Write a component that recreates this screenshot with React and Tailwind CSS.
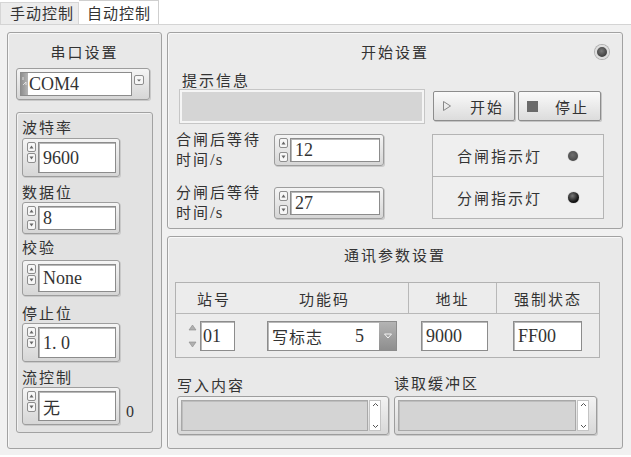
import React from 'react';

const SERIF = "font-['Liberation_Serif','Noto_Sans_CJK_SC',serif]";
const LABEL = 'text-[15px] leading-[20px] tracking-[2px]';

const Arrow = ({ up }) => (
  <svg width="9" height="10" viewBox="0 0 9 10" className="block">
    <rect x="0.5" y="0.5" width="8" height="9" rx="1.5" fill="#f6f6f6" stroke="#8e8e8e" />
    <path d={up ? 'M2.5 6.5L4.5 3.5L6.5 6.5Z' : 'M2.5 3.5L4.5 6.5L6.5 3.5Z'} fill="#666" />
  </svg>
);

const Field = ({ cls = '', children, font = SERIF }) => (
  <div className={`flex items-center border border-[#8c8c8c] bg-white pl-[4px] text-[18px] leading-none shadow-[inset_1px_1px_0_#b8b8b8] ${font} ${cls}`}>
    {children}
  </div>
);

const Spin = ({ cls, value, spread }) => (
  <div className={`flex flex-none rounded-[3px] border border-[#9d9d9d] bg-linear-to-b from-[#f5f5f5] to-[#d6d6d6] py-[3px] pr-[3px] pl-[4px] shadow-[1px_1px_0_#c9c9c9] ${cls}`}>
    <div className={`flex w-[9px] flex-col ${spread ? 'justify-between' : 'gap-[1px]'}`}>
      <Arrow up />
      <Arrow />
    </div>
    <Field cls="ml-[2px] flex-1">{value}</Field>
  </div>
);

const Led = ({ cls }) => <div className={`rounded-full ${cls}`} />;

const TextBox = ({ cls }) => (
  <div className={`flex h-[39px] rounded-[3px] border border-[#9d9d9d] bg-linear-to-b from-[#f3f3f3] to-[#d8d8d8] p-[3px] shadow-[1px_1px_0_#c9c9c9] ${cls}`}>
    <div className="flex-1 border border-[#a8a8a8] bg-[#d4d4d4] shadow-[inset_1px_1px_0_#bdbdbd]" />
    <div className="ml-[1px] flex w-[12px] flex-col items-center justify-between border border-[#c4c4c4] bg-white py-[1px]">
      <svg width="7" height="5" viewBox="0 0 7 5"><path d="M1 4L3.5 1.5L6 4" fill="none" stroke="#555" strokeWidth="1" /></svg>
      <svg width="7" height="5" viewBox="0 0 7 5"><path d="M1 1L3.5 3.5L6 1" fill="none" stroke="#555" strokeWidth="1" /></svg>
    </div>
    <div className="w-[4px]" />
  </div>
);

const WaitLabel = ({ first }) => (
  <div className="w-[98px] flex-none text-[15px] leading-[20px] tracking-[2px]">
    <div>{first}</div>
    <div>
      时间<span className={`${SERIF} text-[17px] tracking-[1px]`}>/s</span>
    </div>
  </div>
);

export default function App() {
  return (
    <div className="h-[457px] w-[631px] overflow-hidden bg-white font-['Noto_Sans_CJK_SC',sans-serif] text-[#333]">
      {/* tabs */}
      <div className="flex h-[24px] items-end">
        <div className="h-[22px] w-[79px] border border-b-0 border-[#d6d6d6] bg-[#ececec] pl-[9px] text-[15px] leading-[20px] tracking-[1px]">
          手动控制
        </div>
        <div className="h-[24px] w-[80px] border border-b-0 border-l-0 border-[#cfcfcf] bg-white pl-[8px] text-[15px] leading-[24px] tracking-[1px]">
          自动控制
        </div>
      </div>

      <div className="flex h-[431px] border-t border-[#d4d4d4] bg-[#f1f1f1] pt-[7px]">
        {/* 串口设置 */}
        <div className="ml-[7px] flex h-[417px] w-[155px] flex-col rounded-[3px] border border-[#a2a2a2] bg-[#e8e8e8] shadow-[inset_1px_1px_0_#f8f8f8]">
          <div className={`mt-[9px] text-center ${LABEL}`}>串口设置</div>

          <div className="mt-[6px] ml-[8px] flex h-[32px] w-[134px] rounded-[3px] border border-[#9d9d9d] bg-linear-to-b from-[#f5f5f5] to-[#d6d6d6] p-[3px] shadow-[1px_1px_0_#c9c9c9]">
            <div className="flex w-[112px] border border-[#8c8c8c] bg-white">
              <div className="flex w-[7px] items-start justify-center bg-linear-to-r from-[#8f8f8f] to-[#b5b5b5] pt-[3px]">
                <svg width="5" height="10" viewBox="0 0 5 10"><path d="M1 1V4M4 6L1 9M4 6V9" stroke="#eee" strokeWidth="0.8" fill="none" /></svg>
              </div>
              <div className={`flex items-center pl-[1px] text-[18px] leading-none ${SERIF}`}>COM4</div>
            </div>
            <div className="flex flex-1 justify-center pt-[3px]">
              <svg width="10" height="10" viewBox="0 0 10 10">
                <rect x="0.5" y="0.5" width="9" height="9" rx="1.5" fill="#f6f6f6" stroke="#8e8e8e" />
                <path d="M3 4.5L5 6.5L7 4.5Z" fill="#666" />
              </svg>
            </div>
          </div>

          <div className="mt-[12px] ml-[8px] flex h-[321px] w-[137px] flex-col rounded-[3px] border border-[#a2a2a2] bg-[#e2e2e2] pl-[5px] shadow-[inset_1px_1px_0_#f3f3f3]">
            <div className={`mt-[4px] ${LABEL}`}>波特率</div>
            <Spin cls="mt-[1px] h-[39px] w-[98px]" value="9600" />
            <div className={`mt-[5px] ${LABEL}`}>数据位</div>
            <Spin cls="h-[32px] w-[98px]" value="8" spread />
            <div className={`mt-[3px] ${LABEL}`}>校验</div>
            <Spin cls="mt-[3px] h-[36px] w-[98px]" value="None" />
            <div className={`mt-[7px] ${LABEL}`}>停止位</div>
            <Spin cls="h-[39px] w-[98px]" value="1. 0" />
            <div className={`mt-[5px] ${LABEL}`}>流控制</div>
            <div className="flex items-end">
              <Spin cls="h-[38px] w-[98px]" value={<span className="font-['Noto_Sans_CJK_SC',sans-serif] text-[17px]">无</span>} />
              <div className={`mb-[4px] ml-[6px] text-[16px] leading-[18px] ${SERIF}`}>0</div>
            </div>
          </div>
        </div>

        <div className="ml-[5px] flex w-[456px] flex-col gap-[7px]">
          {/* 开始设置 */}
          <div className="flex h-[197px] flex-col rounded-[3px] border border-[#a2a2a2] bg-[#ebebeb] shadow-[inset_1px_1px_0_#f8f8f8]">
            <div className="mt-[9px] grid grid-cols-[1fr_auto_1fr] items-center">
              <div />
              <div className={LABEL}>开始设置</div>
              <div className="mr-[13px] justify-self-end">
                <Led cls="h-[14px] w-[14px] border-2 border-[#dedede] bg-[radial-gradient(circle_at_45%_40%,#7a7a7a,#3c3c3c_75%)] shadow-[0_0_0_1px_#b0b0b0]" />
              </div>
            </div>
            <div className={`mt-[8px] pl-[14px] ${LABEL}`}>提示信息</div>
            <div className="flex items-start">
              <div className="ml-[12px] h-[33px] w-[244px] border-2 border-[#f5f5f5] bg-[#d5d5d5] outline outline-[#c6c6c6]" />
              <div className="mt-[1px] ml-[9px] flex h-[30px] w-[82px] items-center rounded-[2px] border border-[#8d8d8d] bg-linear-to-b from-[#fafafa] to-[#dcdcdc] pl-[8px] shadow-[1px_1px_0_#c4c4c4]">
                <svg width="10" height="12" viewBox="0 0 10 12"><path d="M1.5 1.5L8.5 6L1.5 10.5Z" fill="none" stroke="#888" strokeWidth="1" /></svg>
                <span className="ml-[18px] text-[15px] leading-none tracking-[2px]">开始</span>
              </div>
              <div className="mt-[1px] ml-[3px] flex h-[30px] w-[83px] items-center rounded-[2px] border border-[#8d8d8d] bg-linear-to-b from-[#fafafa] to-[#dcdcdc] pl-[8px] shadow-[1px_1px_0_#c4c4c4]">
                <div className="h-[11px] w-[11px] bg-[#6a6a6a]" />
                <span className="ml-[17px] text-[15px] leading-none tracking-[2px]">停止</span>
              </div>
            </div>
            <div className="flex items-start">
              <div className="mt-[6px] ml-[8px] flex flex-col gap-[12px]">
                <div className="flex items-center">
                  <WaitLabel first="合闸后等待" />
                  <Spin cls="h-[32px] w-[110px]" value="12" spread />
                </div>
                <div className="flex items-center">
                  <WaitLabel first="分闸后等待" />
                  <Spin cls="h-[32px] w-[110px]" value="27" spread />
                </div>
              </div>
              <div className="mt-[11px] ml-[48px] flex h-[85px] w-[172px] flex-col border border-[#b4b4b4] bg-[#efefef]">
                <div className="flex flex-1 items-center border-b border-[#b4b4b4] pl-[24px]">
                  <span className="text-[15px] leading-none tracking-[2px]">合闸指示灯</span>
                  <Led cls="ml-[26px] h-[10px] w-[10px] bg-[radial-gradient(circle_at_45%_40%,#6e6e6e,#444_80%)] shadow-[0_0_1px_#888]" />
                </div>
                <div className="flex flex-1 items-center pl-[24px]">
                  <span className="text-[15px] leading-none tracking-[2px]">分闸指示灯</span>
                  <Led cls="ml-[26px] h-[11px] w-[11px] bg-[radial-gradient(circle_at_40%_35%,#777,#111_65%)] shadow-[0_0_1px_#666]" />
                </div>
              </div>
            </div>
          </div>

          {/* 通讯参数设置 */}
          <div className="flex h-[213px] flex-col rounded-[3px] border border-[#a2a2a2] bg-[#e9e9e9] shadow-[inset_1px_1px_0_#f8f8f8]">
            <div className={`mt-[8px] text-center ${LABEL}`}>通讯参数设置</div>
            <div className="mt-[17px] ml-[7px] flex h-[76px] w-[425px] flex-col border border-[#b2b2b2] bg-[#ececec]">
              <div className="flex h-[31px] border-b border-[#b8b8b8] text-[15px] leading-none tracking-[2px]">
                <div className="flex w-[232px] items-center">
                  <span className="ml-[21px]">站号</span>
                  <span className="ml-[68px]">功能码</span>
                </div>
                <div className="flex w-[88px] items-center justify-center border-l border-[#b8b8b8]">地址</div>
                <div className="flex flex-1 items-center justify-center border-l border-[#b8b8b8]">强制状态</div>
              </div>
              <div className="flex flex-1 items-center">
                <div className="ml-[12px] flex h-[30px] w-[9px] flex-col justify-between py-[3px]">
                  <svg width="9" height="7" viewBox="0 0 9 7"><path d="M1 6L4.5 1L8 6Z" fill="#b0b0b0" stroke="#8a8a8a" strokeWidth="0.6" /></svg>
                  <svg width="9" height="7" viewBox="0 0 9 7"><path d="M1 1L4.5 6L8 1Z" fill="#b0b0b0" stroke="#8a8a8a" strokeWidth="0.6" /></svg>
                </div>
                <Field cls="ml-[3px] h-[30px] w-[35px] !pl-[2px]">01</Field>
                <div className="ml-[32px] flex h-[30px] w-[130px] border border-[#8c8c8c] bg-white shadow-[inset_1px_1px_0_#b8b8b8]">
                  <div className="flex flex-1 items-center pl-[4px]">
                    <span className="text-[16px] leading-none tracking-[1px]">写标志</span>
                    <span className={`ml-[32px] text-[18px] leading-none ${SERIF}`}>5</span>
                  </div>
                  <div className="flex w-[17px] items-center justify-center bg-linear-to-b from-[#b4b4b4] to-[#8e8e8e]">
                    <svg width="10" height="8" viewBox="0 0 10 8"><path d="M1.5 2L5 6L8.5 2Z" fill="none" stroke="#f4f4f4" strokeWidth="1" /></svg>
                  </div>
                </div>
                <Field cls="ml-[24px] h-[30px] w-[67px]">9000</Field>
                <Field cls="ml-[25px] h-[30px] w-[69px]">FF00</Field>
              </div>
            </div>
            <div className="mt-[17px] ml-[9px] flex">
              <div className="flex w-[212px] flex-col">
                <div className={LABEL}>写入内容</div>
                <TextBox cls="mt-[1px] w-[212px]" />
              </div>
              <div className="ml-[5px] flex w-[203px] flex-col">
                <div className={`-mt-[2px] ${LABEL}`}>读取缓冲区</div>
                <TextBox cls="mt-[3px] w-[203px]" />
              </div>
            </div>
          </div>
        </div>
      </div>
    </div>
  );
}
